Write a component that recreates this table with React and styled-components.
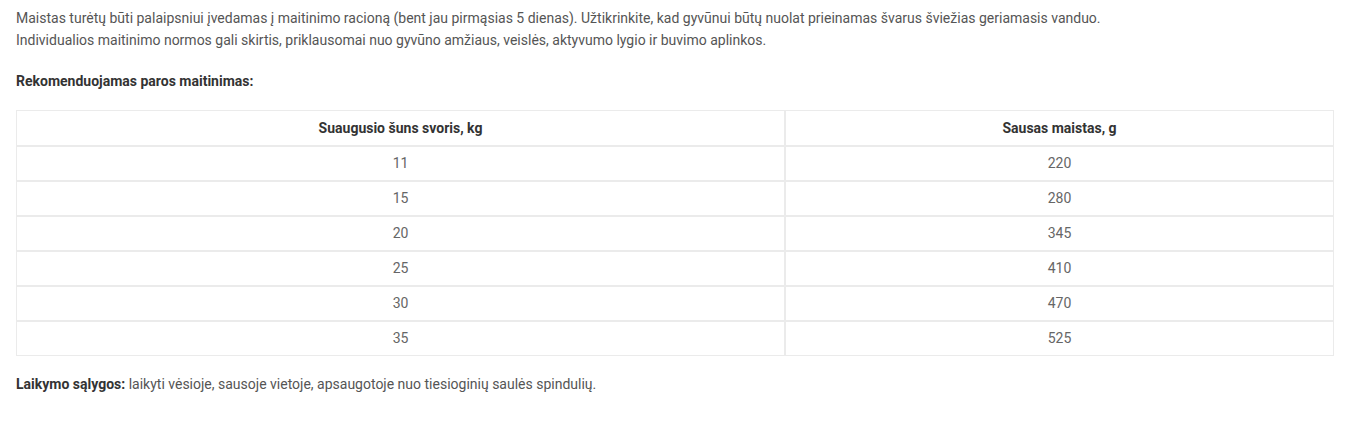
import React from 'react';
import styled, { createGlobalStyle } from 'styled-components';

const GlobalStyle = createGlobalStyle`
  html, body {
    margin: 0;
    padding: 0;
    background: #fff;
  }
  body {
    font-family: Roboto, "Liberation Sans", Arial, sans-serif;
    font-size: 14px;
    color: #555;
  }
`;

const Wrapper = styled.div`
  padding: 7px 16px 16px;
`;

const Text = styled.p`
  margin: 0;
  line-height: 22px;
  color: #555;
`;

const Heading = styled.p`
  margin: 19px 0 0;
  line-height: 22px;
  font-weight: 700;
  color: #333;
`;

const Table = styled.table`
  width: 100%;
  margin-top: 18px;
  border-collapse: separate;
  border-spacing: 0;
  table-layout: fixed;
`;

const HeadCell = styled.th`
  box-sizing: border-box;
  border: 1px solid #ebebeb;
  padding: 8px 10px 7px;
  line-height: 19px;
  font-weight: 700;
  color: #333;
  text-align: center;
  width: ${p => p.$width || 'auto'};
`;

const Cell = styled.td`
  border: 1px solid #ebebeb;
  padding: 7px 10px;
  line-height: 19px;
  color: #666;
  text-align: center;
`;

const Note = styled.p`
  margin: 17px 0 0;
  line-height: 22px;
  color: #555;

  strong {
    color: #333;
    font-weight: 700;
  }
`;

const rows = [
  [11, 220],
  [15, 280],
  [20, 345],
  [25, 410],
  [30, 470],
  [35, 525],
];

export default function App() {
  return (
    <>
      <GlobalStyle />
      <Wrapper>
        <Text>
          Maistas turėtų būti palaipsniui įvedamas į maitinimo racioną (bent jau pirmąsias 5 dienas). Užtikrinkite, kad gyvūnui būtų nuolat prieinamas švarus šviežias geriamasis vanduo.
        </Text>
        <Text>
          Individualios maitinimo normos gali skirtis, priklausomai nuo gyvūno amžiaus, veislės, aktyvumo lygio ir buvimo aplinkos.
        </Text>
        <Heading>Rekomenduojamas paros maitinimas:</Heading>
        <Table>
          <thead>
            <tr>
              <HeadCell $width="58.35%">Suaugusio šuns svoris, kg</HeadCell>
              <HeadCell>Sausas maistas, g</HeadCell>
            </tr>
          </thead>
          <tbody>
            {rows.map(([kg, g]) => (
              <tr key={kg}>
                <Cell>{kg}</Cell>
                <Cell>{g}</Cell>
              </tr>
            ))}
          </tbody>
        </Table>
        <Note>
          <strong>Laikymo sąlygos:</strong> laikyti vėsioje, sausoje vietoje, apsaugotoje nuo tiesioginių saulės spindulių.
        </Note>
      </Wrapper>
    </>
  );
}
